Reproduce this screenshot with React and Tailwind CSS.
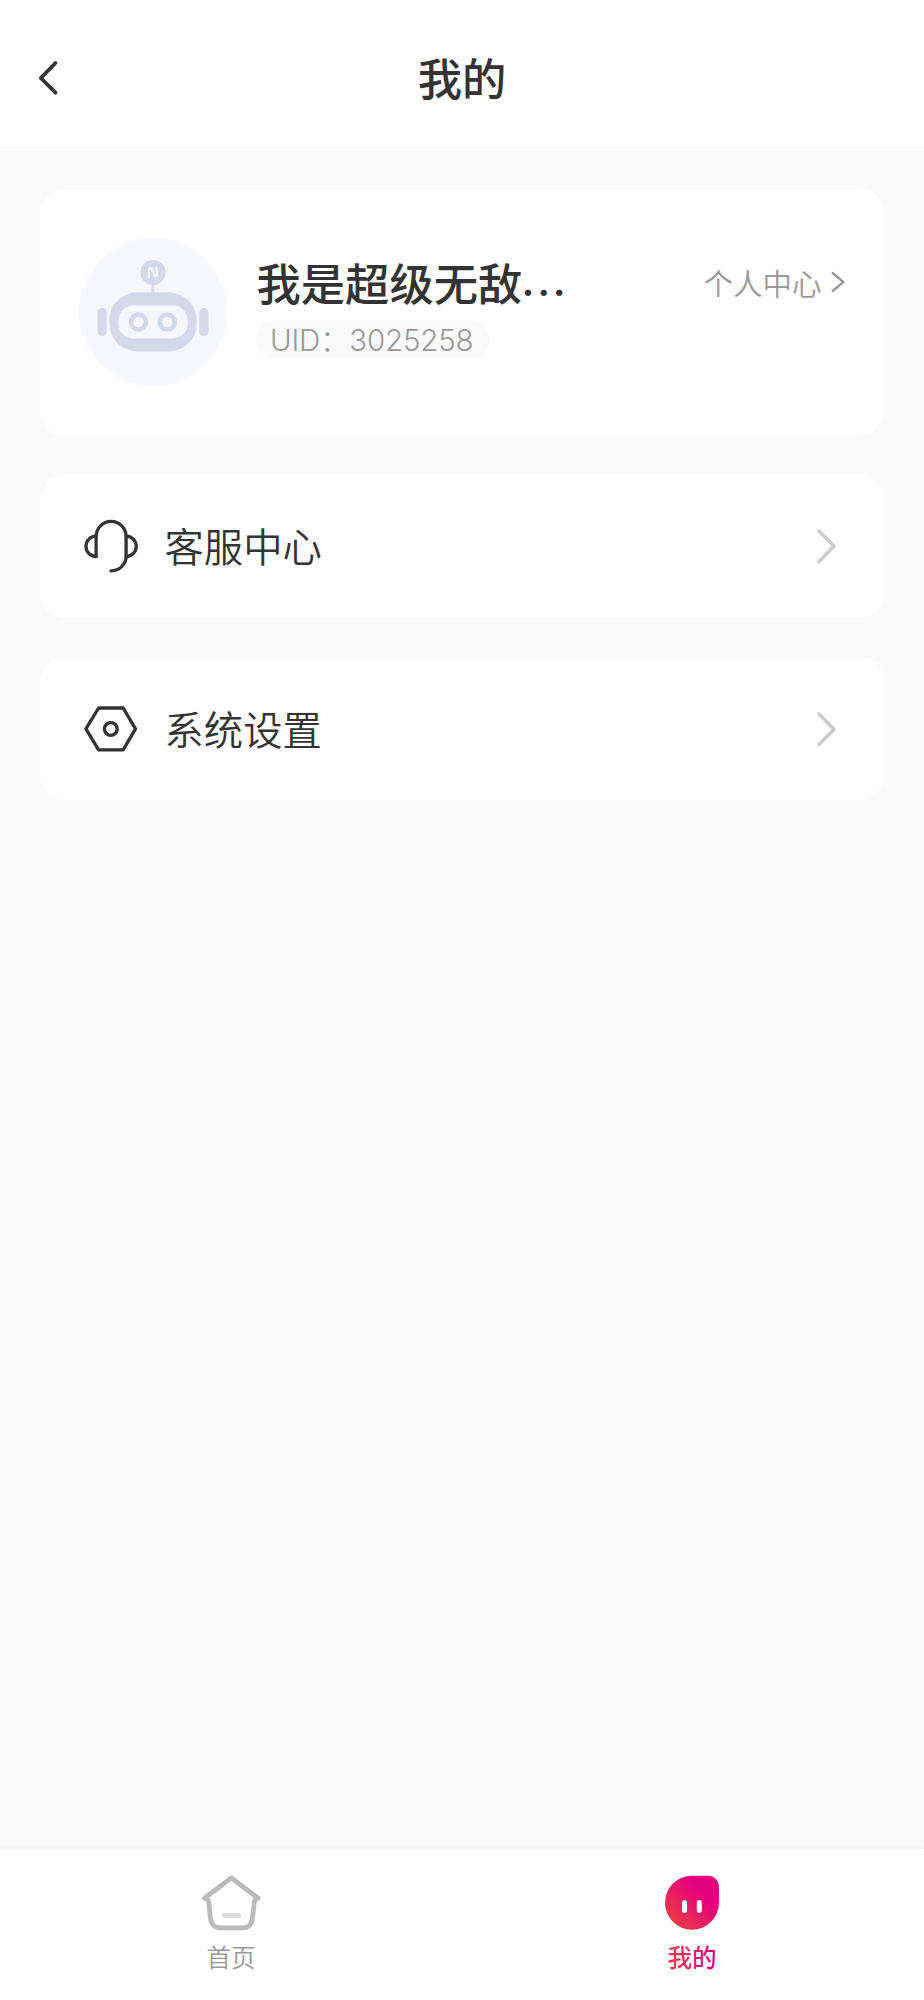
const Chevron = ({ className, d, width, viewBox = '0 0 24 40' }) => (
  <svg className={className} viewBox={viewBox} fill="none" stroke="currentColor" strokeWidth={width} strokeLinecap="round" strokeLinejoin="round">
    <path d={d} />
  </svg>
);

function Robot() {
  return (
    <svg className="h-[148px] w-[148px] shrink-0" viewBox="0 0 148 148" fill="#d5d8eb">
      <circle cx="74" cy="74" r="74" fill="#f5f7fd" />
      <circle cx="74" cy="34.5" r="12.6" />
      <path d="M70 39.4q-.6-4.8.5-9 .8-1.7 1.9.1l3.6 7q1.2 1.6 1.9-.3.7-3.9-.5-7.6" fill="none" stroke="#f5f7fd" strokeWidth="2.4" strokeLinecap="round" strokeLinejoin="round" />
      <path d="M72.6 45h2.8v12h-2.8z" />
      <rect x="18.5" y="70" width="9.3" height="28" rx="4.65" />
      <rect x="120.2" y="70" width="9.3" height="28" rx="4.65" />
      <rect x="30.3" y="54.3" width="87.4" height="59.2" rx="28" />
      <rect x="39.4" y="67.5" width="69.4" height="33" rx="15" fill="#f5f7fd" />
      <g fill="none" stroke="#d5d8eb" strokeWidth="4.7">
        <circle cx="59.5" cy="84" r="7.5" />
        <circle cx="88.3" cy="84" r="7.5" />
      </g>
    </svg>
  );
}

function Headset() {
  return (
    <svg className="h-[54px] w-[54px]" viewBox="0 0 54 54" fill="none" stroke="#333" strokeWidth="3.3" strokeLinecap="round" strokeLinejoin="miter">
      <path d="M12.1 37.5V17.4a15 15 0 0 1 30 0v20.1A15.2 14.3 0 0 1 27 51.8" />
      <path d="M12.1 17.2a10.1 10.1 0 0 0 0 20.3M42.1 17.2a10.1 10.1 0 0 1 0 20.3" />
    </svg>
  );
}

function Hexagon() {
  return (
    <svg className="h-[54px] w-[54px]" viewBox="0 0 54 54" fill="none" stroke="#333" strokeWidth="3.3" strokeLinejoin="round">
      <path d="M14.6 6h24.6L51.5 26.8 39.2 47.8H14.6L1.9 26.8z" />
      <circle cx="26.8" cy="27" r="6.4" />
    </svg>
  );
}

function MenuRow({ icon, label }) {
  return (
    <button className="flex h-[143px] w-full items-center rounded-[25px] bg-white pr-[46.5px] pl-[44.4px] text-left">
      {icon}
      <span className="-mt-0.5 ml-[26.5px] flex-1 text-[39.3px] leading-[56px] font-[350] text-[#333]">{label}</span>
      <Chevron className="h-10 w-6 text-[#ccc]" d="M5 5 20 20.3 5 35.5" width="3.6" />
    </button>
  );
}

export default function App() {
  return (
    <div className="flex h-[2000px] w-[924px] flex-col bg-[#fafafa] font-['Noto_Sans_CJK_SC',sans-serif]">
      <header className="grid h-[147px] shrink-0 grid-cols-[1fr_auto_1fr] items-center bg-white pt-[9px]">
        <Chevron className="ml-9 h-10 w-6 text-[#333]" d="M19.5 5 4.8 20 19.5 34.7" width="3.8" />
        <h1 className="-mt-0.5 text-[44.3px] leading-[60px] font-medium text-[#333]">我的</h1>
      </header>

      <main className="flex flex-1 flex-col gap-[39.4px] pt-[42px] pr-[40px] pl-[39.7px]">
        <section className="flex h-[246.5px] items-start rounded-[25px] bg-white pt-[48.7px] pr-[38px] pl-[39.3px]">
          <Robot />
          <div className="ml-[29.5px] flex flex-col items-start pt-[17.5px]">
            <h2 className="text-[44.3px] leading-[54px] font-medium whitespace-nowrap text-[#333]">
              我是超级无敌<span className="-ml-px align-[5px] font-['Inter'] leading-none tracking-[2.2px]">...</span>
            </h2>
            <p className="mt-[10.5px] flex h-[39px] items-center rounded-full bg-[#fafafa] pt-0.5 pr-[16px] pl-[13.5px] text-[29.5px] leading-[39px] font-light whitespace-nowrap text-[#999]">
              <span className="font-['Inter','Noto_Sans_CJK_SC'] tracking-[-0.2px]">UID：</span>
              <span className="font-['Inter'] tracking-[-0.2px]">3025258</span>
            </p>
          </div>
          <a className="mt-[23px] ml-auto flex items-center text-[29.5px] leading-[42px] font-[350] text-[#999]">
            个人中心
            <Chevron className="mt-px ml-[8.5px] h-6 w-4" viewBox="0 0 16 24" d="M2.7 3 13.3 12 2.7 21" width="2.4" />
          </a>
        </section>
        <MenuRow icon={<Headset />} label="客服中心" />
        <MenuRow icon={<Hexagon />} label="系统设置" />
      </main>

      <nav className="grid h-[151px] shrink-0 grid-cols-2 bg-white pt-[24px] shadow-[0_-1px_6px_rgba(0,0,0,0.05)]">
        <a className="flex flex-col items-center">
          <svg className="h-[60px] w-[60px]" viewBox="0 0 60 60" fill="none" strokeLinecap="round" strokeLinejoin="round">
            <path d="M3.5 25.2 30.2 5l26.9 20.2q-3.2.7-3.8 4l-1.8 16q-1.2 9.6-10.2 9.6H19.6q-9 0-10.2-9.6l-1.6-16q-.6-3.3-4.3-4z" stroke="#bbb" strokeWidth="4.8" />
            <path d="M23.2 42.5h14.5" stroke="#ddd" strokeWidth="5" />
          </svg>
          <span className="mt-[7px] text-[24.6px] leading-[32px] font-[350] text-[#999]">首页</span>
        </a>
        <a className="flex flex-col items-center pr-[2px]">
          <svg className="h-[60px] w-[60px]" viewBox="0 0 60 60">
            <defs>
              <linearGradient id="brand" x1="0.12" y1="0.88" x2="0.68" y2="0.3">
                <stop stopColor="#ee3d44" />
                <stop offset="1" stopColor="#e4007f" />
              </linearGradient>
            </defs>
            <path d="M30 2.7H44.5Q57 2.7 57 15.2V29.7A27 27 0 1 1 30 2.7Z" fill="url(#brand)" />
            <path d="M22.5 29.5v8M37.3 29.5v8" stroke="#fff" strokeWidth="5" strokeLinecap="round" />
          </svg>
          <span className="mt-[7px] bg-linear-to-r from-[#ee3d44] to-[#e4007f] to-80% bg-clip-text text-[24.6px] leading-[32px] font-medium text-transparent">我的</span>
        </a>
      </nav>
    </div>
  );
}
